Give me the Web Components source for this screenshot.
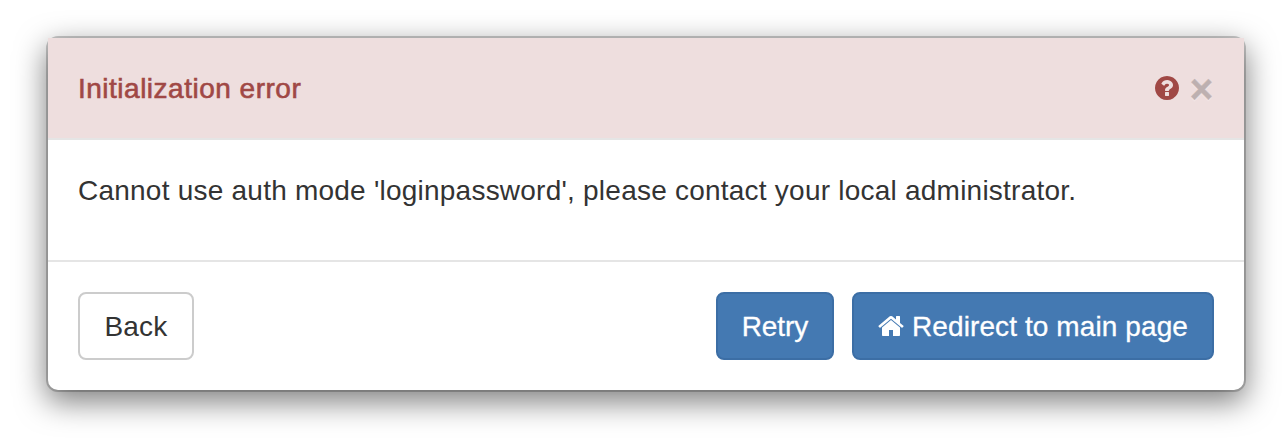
<!DOCTYPE html>
<html lang="en">
<head>
<meta charset="utf-8">
<title>Initialization error</title>
<style>
html{background:#fff}
body{box-sizing:border-box;margin:0;height:438px;padding:38px 40px 0 48px;color:#333;font:28px/40px "Liberation Sans",Arial,sans-serif}
</style>
</head>
<body>
<modal-dialog>
  <span slot="title">Initialization error</span>
  <modal-message>Cannot use auth mode 'loginpassword', please contact your local administrator.</modal-message>
  <action-button slot="back" style="--w:116px;--ls:.2px">Back</action-button>
  <action-button slot="actions" primary style="--w:118px;--ls:-.05px">Retry</action-button>
  <action-button slot="actions" primary style="--w:362px;--ls:.1px"><home-icon></home-icon>Redirect to main page</action-button>
</modal-dialog>
<script>
const define = (name, html) => customElements.define(name, class extends HTMLElement {
  constructor() {
    super();
    this.attachShadow({mode: 'open'}).innerHTML = html;
  }
});

define('home-icon', `
<style>:host{display:inline-block;width:26px;height:28px;margin-right:8px}svg{display:block}</style>
<svg width="26" height="28" viewBox="64 0 1664 1792" fill="currentColor"><path d="M1472 992v480q0 26-19 45t-45 19h-384v-384h-256v384h-384q-26 0-45-19t-19-45v-480q0-1 .5-3t.5-3l575-474 575 474q1 2 1 6zm223-69l-62 74q-8 9-21 11h-3q-13 0-21-7l-692-577-692 577q-12 8-24 7-13-2-21-11l-62-74q-8-10-7-23.5t11-21.5l719-599q32-26 76-26t76 26l244 204v-195q0-14 9-23t23-9h192q14 0 23 9t9 23v408l219 182q10 8 11 21.5t-7 23.5z"/></svg>`);

define('help-icon', `
<style>:host{display:block;width:24px;height:24px;color:#a04845}svg{display:block}</style>
<svg width="24" height="24" viewBox="128 128 1536 1536" fill="currentColor"><path d="M1024 1376v-192q0-14-9-23t-23-9h-192q-14 0-23 9t-9 23v192q0 14 9 23t23 9h192q14 0 23-9t9-23zm256-672q0-88-55.5-163t-138.5-116-170-41q-243 0-371 213-15 24 8 42l132 100q7 6 19 6 16 0 25-12 53-68 86-92 34-24 86-24 48 0 85.5 26t37.5 59q0 38-20 61t-68 45q-63 28-115.5 86.5t-52.5 125.5v36q0 14 9 23t23 9h192q14 0 23-9t9-23q0-19 21.5-49.5t54.5-49.5q32-18 49-28.5t46-35 44.5-48 28-60.5 12.5-81zm384 192q0 209-103 385.5t-279.5 279.5-385.5 103-385.5-103-279.5-279.5-103-385.5 103-385.5 279.5-279.5 385.5-103 385.5 103 279.5 279.5 103 385.5z"/></svg>`);

define('close-button', `
<style>
:host{display:block}
button{display:block;width:25px;height:42px;padding:2px 0 0;border:0;background:none;color:#000;opacity:.2;font:bold 40px/40px "Liberation Sans",Arial,sans-serif;text-shadow:0 2px 0 #fff;-webkit-text-stroke:.5px #000}
</style>
<button aria-label="Close">×</button>`);

define('modal-message', `
<style>:host{display:block;white-space:nowrap;letter-spacing:.23px}</style><slot></slot>`);

define('action-button', `
<style>
:host{display:block}
button{box-sizing:border-box;display:flex;align-items:center;justify-content:center;width:var(--w);height:68px;padding:2px 0 0;border:2px solid #ccc;border-radius:8px;background:#fff;color:#333;font:inherit;letter-spacing:var(--ls);white-space:nowrap}
:host([primary]) button{border-color:#3c6ea5;background:#4479b2;color:#fff;-webkit-text-stroke:.3px #fff}
::slotted(home-icon){transform:translateY(-1px)}
</style>
<button><slot></slot></button>`);

define('modal-dialog', `
<style>
:host{display:block;height:352px;border-radius:10px;background:#fff;box-shadow:0 0 0 2px rgba(0,0,0,.2),0 10px 30px 2px rgba(0,0,0,.5)}
header{box-sizing:border-box;display:flex;align-items:center;height:102px;padding:0 30px;border-bottom:2px solid #e5e5e5;background:#eedede}
h4{flex:1;margin:0;padding-top:2px;font:inherit;color:#a04845;letter-spacing:.5px;-webkit-text-stroke:.6px #a04845}
.tools{display:flex;align-items:center;gap:10px}
main{box-sizing:border-box;height:120px;padding:31px 30px}
footer{box-sizing:border-box;display:flex;gap:18px;height:130px;padding:30px;border-top:2px solid #e5e5e5}
.gap{flex:1}
</style>
<header><h4><slot name="title"></slot></h4><div class="tools"><help-icon></help-icon><close-button></close-button></div></header>
<main><slot></slot></main>
<footer><slot name="back"></slot><div class="gap"></div><slot name="actions"></slot></footer>`);
</script>
</body>
</html>
